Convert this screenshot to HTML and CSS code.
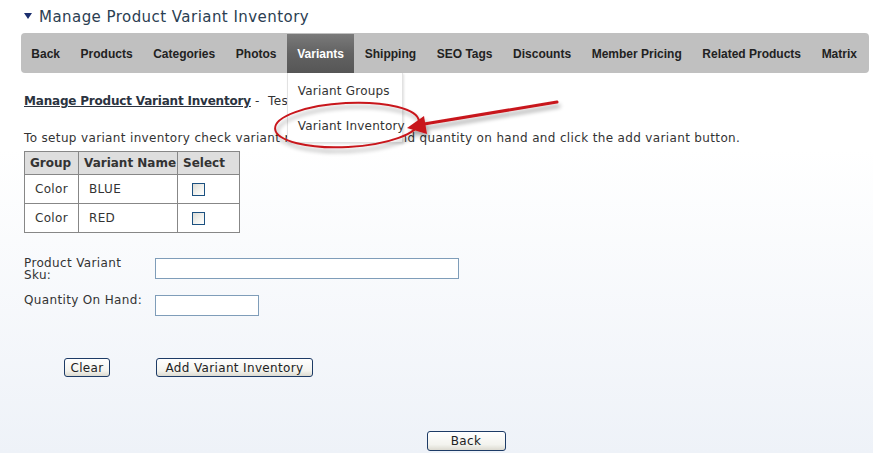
FILE: index.html
```html
<!DOCTYPE html>
<html>
<head>
<meta charset="utf-8">
<link rel="stylesheet" href="styles.css">
</head>
<body>
<div class="page">
  <h1 class="title"><span class="tri"></span>Manage Product Variant Inventory</h1>
  <nav class="nav">
    <a class="nav-item">Back</a>
    <a class="nav-item">Products</a>
    <a class="nav-item">Categories</a>
    <a class="nav-item">Photos</a>
    <div class="nav-item active">Variants
      <div class="dropdown">
        <div class="dd-item">Variant Groups</div>
        <div class="dd-item">Variant Inventory</div>
      </div>
    </div>
    <a class="nav-item">Shipping</a>
    <a class="nav-item">SEO Tags</a>
    <a class="nav-item">Discounts</a>
    <a class="nav-item">Member Pricing</a>
    <a class="nav-item">Related Products</a>
    <a class="nav-item">Matrix</a>
  </nav>

  <div class="content">
    <p class="heading"><span class="hlink">Manage Product Variant Inventory</span> - &nbsp;Test Product Variants</p>
    <p class="instr">To setup variant inventory check variant name, enter sku and quantity on hand and click the add variant button.</p>
    <table class="grid">
      <colgroup><col class="w1"><col class="w2"><col class="w3"></colgroup>
      <tr><th>Group</th><th>Variant Name</th><th>Select</th></tr>
      <tr><td class="c">Color</td><td class="l">BLUE</td><td class="l"><span class="cb"></span></td></tr>
      <tr><td class="c">Color</td><td class="l">RED</td><td class="l"><span class="cb"></span></td></tr>
    </table>

    <div class="form">
      <div class="frow">
        <label class="flabel">Product Variant Sku:</label>
        <span class="input wide"></span>
      </div>
      <div class="frow">
        <label class="flabel">Quantity On Hand:</label>
        <span class="input narrow"></span>
      </div>
    </div>

    <div class="actions">
      <button class="btn clear">Clear</button>
      <button class="btn add">Add Variant Inventory</button>
    </div>
  </div>
  <div class="footer">
    <button class="btn back">Back</button>
  </div>

  <svg class="annot" width="873" height="453" viewBox="0 0 873 453">
    <defs>
      <filter id="sh" x="-20%" y="-50%" width="140%" height="200%">
        <feGaussianBlur in="SourceAlpha" stdDeviation="2"/>
        <feOffset dx="2" dy="4" result="b"/>
        <feComponentTransfer><feFuncA type="linear" slope="0.35"/></feComponentTransfer>
        <feMerge><feMergeNode/><feMergeNode in="SourceGraphic"/></feMerge>
      </filter>
    </defs>
    <g filter="url(#sh)">
      <ellipse cx="347" cy="125" rx="72" ry="22" fill="none" stroke="#c8161b" stroke-width="2" transform="rotate(-3 347 125)"/>
      <line x1="557" y1="102" x2="418" y2="125" stroke="#c8161b" stroke-width="3" stroke-linecap="round"/>
      <polygon points="407,128 424,116 427,134" fill="#c8161b"/>
    </g>
  </svg>
</div>
</body>
</html>
```
FILE: styles.css
```css
html, body {
  margin: 0;
  padding: 0;
}
body {
  width: 873px;
  height: 453px;
  overflow: hidden;
  background: linear-gradient(to bottom, #ffffff 0px, #ffffff 150px, #eef2f8 453px);
  font-family: "DejaVu Sans", Verdana, sans-serif;
  font-size: 12px;
  letter-spacing: 0.35px;
  color: #333;
}
.page {
  position: relative;
  height: 453px;
}
.title {
  margin: 0;
  padding: 6px 0 0 24px;
  height: 27px;
  box-sizing: border-box;
  font-size: 15px;
  font-weight: normal;
  letter-spacing: 0.45px;
  line-height: 20px;
  color: #2b3e52;
  display: flex;
  align-items: center;
}
.tri {
  width: 0;
  height: 0;
  border-left: 4px solid transparent;
  border-right: 4px solid transparent;
  border-top: 6px solid #1b2f6e;
  margin-right: 7px;
  margin-top: -2px;
}
.nav {
  margin: 6px 4px 0 21px;
  height: 40px;
  background: #c0c0c0;
  border-radius: 4px;
  display: flex;
  align-items: stretch;
  font-family: "Liberation Sans", Arial, sans-serif;
  font-weight: bold;
  font-size: 12px;
  letter-spacing: 0;
  color: #222;
}
.nav-item {
  padding: 1px 10.3px 0;
  display: flex;
  align-items: center;
  white-space: nowrap;
}
.nav-item.active {
  position: relative;
  color: #fff;
  padding-left: 10.5px;
  padding-right: 10.5px;
  background: linear-gradient(to bottom, #7a7a7a 0%, #626262 50%, #565656 100%);
  margin-top: 1px;
}
.dropdown {
  position: absolute;
  top: 39px;
  left: 0;
  width: 116px;
  height: 70px;
  background: #fff;
  border: 1px solid #e2e2e2;
  border-top: none;
  box-shadow: 1px 1px 2px rgba(0,0,0,0.12);
  font-family: "DejaVu Sans", Verdana, sans-serif;
  font-weight: normal;
  font-size: 12px;
  letter-spacing: 0.2px;
  color: #333;
  z-index: 2;
  padding-top: 6px;
  box-sizing: border-box;
}
.dd-item {
  padding-left: 10px;
  height: 35px;
  line-height: 24px;
}
.content {
  padding-left: 24px;
}
.heading {
  margin: 21px 0 0 0;
  line-height: 15px;
  color: #333;
}
.hlink {
  font-weight: bold;
  letter-spacing: -0.2px;
  text-decoration: underline;
  color: #2b3340;
}
.instr {
  margin: 22px 0 0 0;
  line-height: 15px;
  white-space: nowrap;
}
.grid {
  margin-top: 5px;
  width: 215px;
  border-collapse: collapse;
  border: 1px solid #878787;
  table-layout: fixed;
}
.w1 { width: 54px; }
.w2 { width: 99px; }
.w3 { width: 62px; }
.grid th, .grid td {
  border: 1px solid #878787;
  padding: 0;
  font-size: 12px;
  white-space: nowrap;
}
.grid th {
  background: #dedede;
  height: 22px;
  text-align: left;
  padding: 0 2px 0 5px;
  letter-spacing: 0;
  color: #333;
  overflow: hidden;
}
.grid td {
  height: 28px;
  background: #fff;
}
.grid td.c {
  text-align: center;
}
.grid td.l {
  padding-left: 10px;
}
.cb {
  display: inline-block;
  width: 11px;
  height: 11px;
  border: 1px solid #1c5180;
  background: linear-gradient(135deg, #dcdcd7 0%, #f4f4f0 60%, #fff 100%);
  vertical-align: middle;
  margin-left: 4px;
}
.form {
  margin-top: 24px;
}
.frow {
  display: flex;
  align-items: flex-start;
  margin-bottom: 13px;
}
.flabel {
  width: 124px;
  margin-right: 7px;
  line-height: 12px;
  color: #333;
}
.input {
  display: block;
  height: 19px;
  border: 1px solid #7f9db9;
  background: #fff;
  margin-top: 1px;
}
.wide { width: 302px; }
.narrow { width: 102px; }
.actions {
  margin-top: 42px;
  display: flex;
  padding-left: 40px;
}
.btn {
  font-family: "DejaVu Sans", Verdana, sans-serif;
  font-size: 12px;
  letter-spacing: 0.35px;
  color: #222;
  height: 19px;
  padding: 0 5px;
  border: 1px solid #1d3b66;
  border-radius: 3px;
  background: linear-gradient(to bottom, #ffffff 0%, #f3f3ee 70%, #dcdad0 100%);
  line-height: 16px;
}
.clear {
  width: 46px;
  margin-right: 46px;
}
.add {
  width: 157px;
}
.footer {
  display: flex;
  justify-content: center;
  padding-left: 59px;
  margin-top: 54px;
}
.back {
  width: 79px;
  height: 20px;
}
.annot {
  position: absolute;
  left: 0;
  top: 0;
  pointer-events: none;
  z-index: 3;
}
```
